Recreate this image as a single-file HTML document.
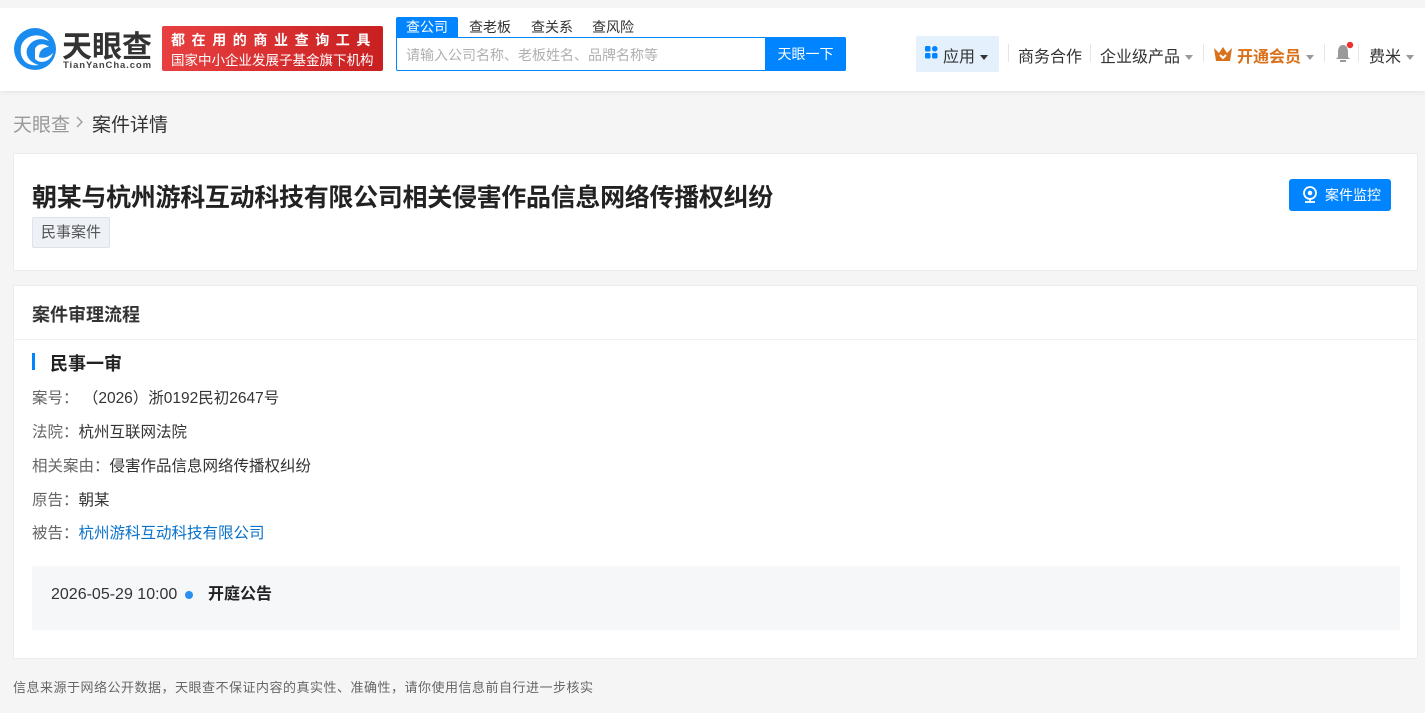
<!DOCTYPE html>
<html><head><meta charset="utf-8">
<style>
*{margin:0;padding:0;box-sizing:border-box}
body{width:1425px;height:713px;background:#f5f5f5;font-family:"Liberation Sans","Noto Sans CJK SC",sans-serif;color:#333;position:relative;overflow:hidden}
.a{position:absolute;white-space:nowrap}
.hdr{position:absolute;left:0;top:8px;width:1425px;height:83px;background:#fff;box-shadow:0 2px 4px rgba(0,0,0,.06)}
.card{position:absolute;left:13px;width:1405px;background:#fff;border:1px solid #ececec}
.sep{position:absolute;top:44px;width:1px;height:18px;background:#e5e5e5}
.caret{display:inline-block;width:0;height:0;border-left:4px solid transparent;border-right:4px solid transparent;border-top:5px solid #999;vertical-align:middle;margin-left:5px}
.lbl{color:#666}
.row{font-size:15.5px;line-height:20px}
</style></head><body>
<div class="a" style="left:0;top:0;width:1425px;height:8px;background:#f5f5f5"></div>
<div class="hdr"></div>
<svg class="a" style="left:13px;top:27px" width="44" height="44" viewBox="0 0 44 44">
<circle cx="22" cy="22" r="21" fill="#1a8cf0"/>
<path d="M8 20 C10 8 28 4 36 14 C28 10 18 12 14 22 C12 30 18 36 26 38 C14 40 6 32 8 20Z" fill="#fff"/>
<path d="M22 22 C24 16 32 16 36 20 C30 20 26 24 26 30 C30 32 36 30 40 26 C38 34 28 38 22 32Z" fill="#fff"/>
</svg>
<div class="a" style="left:62px;top:22px;font-size:30px;font-weight:bold;color:#333">天眼查</div>
<div class="a" style="left:63px;top:60px;font-size:9.5px;color:#444;letter-spacing:.9px;font-weight:bold">TianYanCha.com</div>
<div class="a" style="left:162px;top:26px;width:221px;height:45px;background:linear-gradient(90deg,#e84040,#c82020);border-radius:2px;color:#fff;font-size:14px;font-weight:bold">
<div style="position:absolute;left:9px;top:4px;letter-spacing:6.6px">都在用的商业查询工具</div>
<div style="position:absolute;left:9px;top:23px;font-size:13.5px;font-weight:normal">国家中小企业发展子基金旗下机构</div></div>
<div class="a" style="left:396px;top:17px;width:62px;height:20px;background:#0084ff;border-radius:2px 2px 0 0;color:#fff;font-size:14px;text-align:center;line-height:20px">查公司</div>
<div class="a" style="left:469px;top:17px;font-size:14px;color:#333;line-height:20px">查老板</div>
<div class="a" style="left:531px;top:17px;font-size:14px;color:#333;line-height:20px">查关系</div>
<div class="a" style="left:592px;top:17px;font-size:14px;color:#333;line-height:20px">查风险</div>
<div class="a" style="left:396px;top:37px;width:450px;height:34px;border:1px solid #0084ff;border-radius:0 2px 2px 2px;background:#fff"></div>
<div class="a" style="left:406px;top:45px;font-size:14px;color:#b0b0b0">请输入公司名称、老板姓名、品牌名称等</div>
<div class="a" style="left:765px;top:37px;width:81px;height:34px;background:#0084ff;color:#fff;font-size:14px;text-align:center;line-height:34px;border-radius:0 2px 2px 0">天眼一下</div>
<div class="a" style="left:916px;top:36px;width:83px;height:36px;background:#e4f0fc;border-radius:2px"></div>
<svg class="a" style="left:925px;top:46px" width="13" height="13"><rect x="0" y="0" width="5.5" height="5.5" rx="1.5" fill="#0084ff"/><rect x="7" y="0" width="5.5" height="5.5" rx="2.7" fill="#0084ff"/><rect x="0" y="7" width="5.5" height="5.5" rx="1.5" fill="#0084ff"/><rect x="7" y="7" width="5.5" height="5.5" rx="1.5" fill="#0084ff"/></svg>
<div class="a" style="left:943px;top:43px;font-size:16px;color:#333">应用<span class="caret" style="border-top-color:#333"></span></div>
<div class="sep" style="left:1008px"></div>
<div class="a" style="left:1018px;top:43px;font-size:16px;color:#333">商务合作</div>
<div class="sep" style="left:1090px"></div>
<div class="a" style="left:1100px;top:43px;font-size:16px;color:#333">企业级产品<span class="caret"></span></div>
<div class="sep" style="left:1203px"></div>
<svg class="a" style="left:1213px;top:45px" width="20" height="17" viewBox="0 0 20 17"><path d="M1 3 L6 8 L10 2 L14 8 L19 3 L17 16 L3 16Z" fill="#d9701a"/><path d="M7 10 L10 13 L13 10" stroke="#fff" stroke-width="2" fill="none"/></svg>
<div class="a" style="left:1237px;top:43px;font-size:16px;color:#d9701a;font-weight:bold">开通会员<span class="caret"></span></div>
<div class="sep" style="left:1324px"></div>
<svg class="a" style="left:1334px;top:42px" width="20" height="22" viewBox="0 0 20 22"><path d="M9 3 C5 3 4 7 4 10 L4 15 L2 17 L16 17 L14 15 L14 10 C14 7 13 3 9 3Z" fill="#999"/><rect x="6" y="18" width="6" height="2" fill="#999"/><circle cx="16" cy="3" r="3.2" fill="#f03030"/></svg>
<div class="sep" style="left:1358px"></div>
<div class="a" style="left:1369px;top:43px;font-size:16px;color:#333">费米<span class="caret"></span></div>
<div class="a" style="left:13px;top:110px;font-size:19px;color:#999">天眼查</div>
<svg class="a" style="left:74px;top:115px" width="10" height="14"><path d="M3 2 L8 7 L3 12" stroke="#999" stroke-width="1.3" fill="none"/></svg>
<div class="a" style="left:92px;top:110px;font-size:19px;color:#333">案件详情</div>
<div class="card" style="top:153px;height:118px"></div>
<div class="a" style="left:32px;top:178px;font-size:25px;font-weight:bold;color:#222;letter-spacing:-0.3px">朝某与杭州游科互动科技有限公司相关侵害作品信息网络传播权纠纷</div>
<div class="a" style="left:32px;top:217px;width:78px;height:31px;background:#eef2f6;border:1px solid #dde3ea;border-radius:2px;font-size:15px;color:#555;text-align:center;line-height:29px">民事案件</div>
<div class="a" style="left:1289px;top:179px;width:102px;height:32px;background:#0084ff;border-radius:3px;color:#fff;font-size:14px;line-height:32px;padding-left:36px">案件监控</div>
<svg class="a" style="left:1302px;top:186px" width="16" height="18" viewBox="0 0 16 18"><circle cx="8" cy="7" r="6" stroke="#fff" stroke-width="1.8" fill="none"/><circle cx="8" cy="7" r="2.3" fill="#fff"/><path d="M3 16 L13 16" stroke="#fff" stroke-width="1.8"/><path d="M8 13 L8 16" stroke="#fff" stroke-width="1.8"/></svg>
<div class="card" style="top:285px;height:374px"></div>
<div class="a" style="left:14px;top:339px;width:1403px;height:1px;background:#f0f0f0"></div>
<div class="a" style="left:32px;top:301px;font-size:18px;font-weight:bold;color:#333">案件审理流程</div>
<div class="a" style="left:32px;top:353px;width:3px;height:17px;background:#0084ff"></div>
<div class="a" style="left:50px;top:350px;font-size:18px;font-weight:bold;color:#222">民事一审</div>
<div class="a row" style="left:32px;top:389px"><span class="lbl">案号：</span> （2026）浙0192民初2647号</div>
<div class="a row" style="left:32px;top:423px"><span class="lbl">法院：</span>杭州互联网法院</div>
<div class="a row" style="left:32px;top:457px"><span class="lbl">相关案由：</span>侵害作品信息网络传播权纠纷</div>
<div class="a row" style="left:32px;top:491px"><span class="lbl">原告：</span>朝某</div>
<div class="a row" style="left:32px;top:524px"><span class="lbl">被告：</span><span style="color:#0a72c9">杭州游科互动科技有限公司</span></div>
<div class="a" style="left:32px;top:566px;width:1368px;height:64px;background:#f6f7f9"></div>
<div class="a" style="left:51px;top:585px;font-size:16px;color:#333;line-height:20px">2026-05-29 10:00</div>
<div class="a" style="left:185px;top:591px;width:8px;height:8px;border-radius:50%;background:#2b8ff0"></div>
<div class="a" style="left:208px;top:584px;font-size:16px;font-weight:bold;color:#222;line-height:22px">开庭公告</div>
<div class="a" style="left:13px;top:677px;font-size:13px;color:#666;letter-spacing:0.5px">信息来源于网络公开数据，天眼查不保证内容的真实性、准确性，请你使用信息前自行进一步核实</div>
</body></html>
